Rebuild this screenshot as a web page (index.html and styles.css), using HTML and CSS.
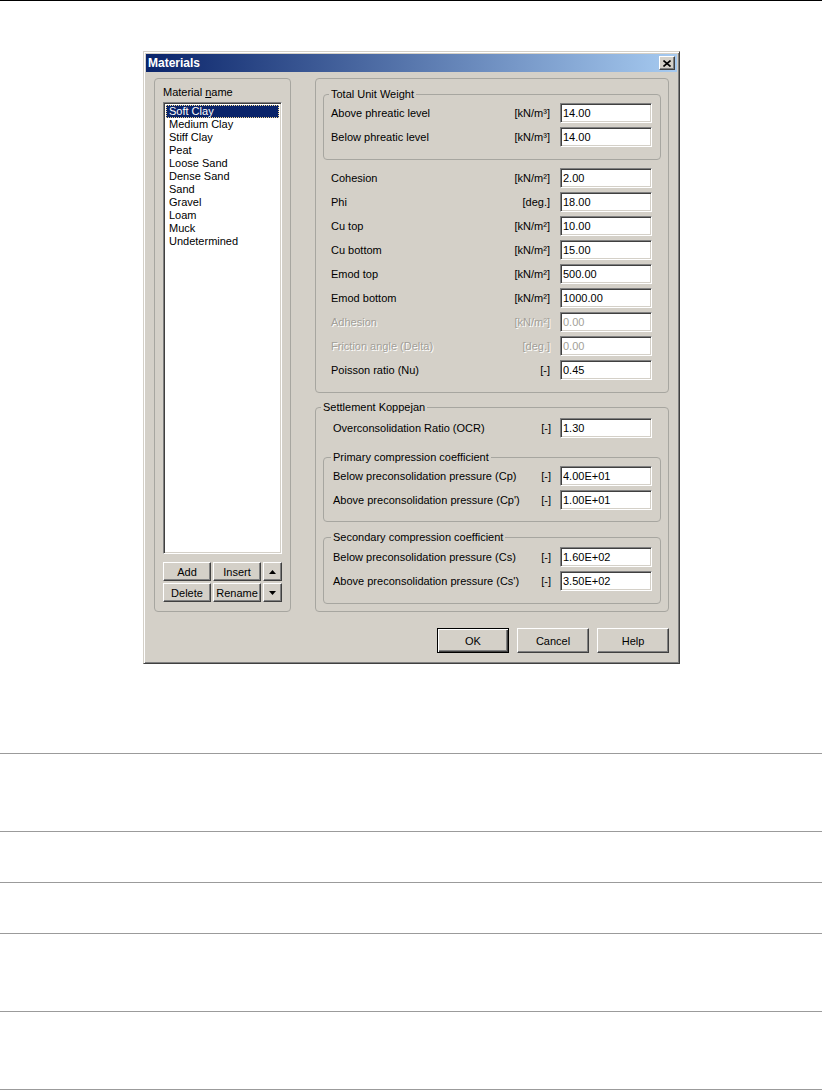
FILE: index.html
```html
<!DOCTYPE html>
<html>
    <head>

        <title>Materials</title>

        <link rel="stylesheet" href="styles.css">

    </head>
    <body>

        <div class="page-top"></div>

        <div class="figure">
            <div class="window">

                <div class="titlebar">
                    <span class="title">Materials</span>
                    <button class="btn close">
                        <svg width="8" height="7" viewBox="0 0 8 7"><path d="M0.5 0.5L7.5 6.5M7.5 0.5L0.5 6.5" stroke="#000" stroke-width="1.6"/></svg>
                    </button>
                </div>

                <div class="dialog-body">
                    <div class="columns">

                        <div class="group list-group">
                            <div class="caption">Material <u>n</u>ame</div>
                            <ul class="listbox">
                                <li class="selected">Soft Clay</li>
                                <li>Medium Clay</li>
                                <li>Stiff Clay</li>
                                <li>Peat</li>
                                <li>Loose Sand</li>
                                <li>Dense Sand</li>
                                <li>Sand</li>
                                <li>Gravel</li>
                                <li>Loam</li>
                                <li>Muck</li>
                                <li>Undetermined</li>
                            </ul>
                            <div class="list-buttons">
                                <button class="btn">Add</button>
                                <button class="btn">Insert</button>
                                <button class="btn arrow"><svg width="7" height="4" viewBox="0 0 7 4"><path d="M0 4H7L3.5 0Z"/></svg></button>
                                <button class="btn">Delete</button>
                                <button class="btn">Rename</button>
                                <button class="btn arrow"><svg width="7" height="4" viewBox="0 0 7 4"><path d="M0 0H7L3.5 4Z"/></svg></button>
                            </div>
                        </div>

                        <div class="params">

                            <div class="group props">
                                <fieldset class="subgroup weight">
                                    <legend>Total Unit Weight</legend>
                                    <div class="row">
                                        <span class="label">Above phreatic level</span>
                                        <span class="unit">[kN/m³]</span>
                                        <input class="edit" type="text" value="14.00">
                                    </div>
                                    <div class="row">
                                        <span class="label">Below phreatic level</span>
                                        <span class="unit">[kN/m³]</span>
                                        <input class="edit" type="text" value="14.00">
                                    </div>
                                </fieldset>

                                <div class="rows">
                                    <div class="row">
                                        <span class="label">Cohesion</span>
                                        <span class="unit">[kN/m²]</span>
                                        <input class="edit" type="text" value="2.00">
                                    </div>
                                    <div class="row">
                                        <span class="label">Phi</span>
                                        <span class="unit">[deg.]</span>
                                        <input class="edit" type="text" value="18.00">
                                    </div>
                                    <div class="row">
                                        <span class="label">Cu top</span>
                                        <span class="unit">[kN/m²]</span>
                                        <input class="edit" type="text" value="10.00">
                                    </div>
                                    <div class="row">
                                        <span class="label">Cu bottom</span>
                                        <span class="unit">[kN/m²]</span>
                                        <input class="edit" type="text" value="15.00">
                                    </div>
                                    <div class="row">
                                        <span class="label">Emod top</span>
                                        <span class="unit">[kN/m²]</span>
                                        <input class="edit" type="text" value="500.00">
                                    </div>
                                    <div class="row">
                                        <span class="label">Emod bottom</span>
                                        <span class="unit">[kN/m²]</span>
                                        <input class="edit" type="text" value="1000.00">
                                    </div>
                                    <div class="row disabled">
                                        <span class="label">Adhesion</span>
                                        <span class="unit">[kN/m²]</span>
                                        <input class="edit" type="text" value="0.00" disabled>
                                    </div>
                                    <div class="row disabled">
                                        <span class="label">Friction angle (Delta)</span>
                                        <span class="unit">[deg.]</span>
                                        <input class="edit" type="text" value="0.00" disabled>
                                    </div>
                                    <div class="row">
                                        <span class="label">Poisson ratio (Nu)</span>
                                        <span class="unit">[-]</span>
                                        <input class="edit" type="text" value="0.45">
                                    </div>
                                </div>
                            </div>

                            <fieldset class="group settlement">
                                <legend>Settlement Koppejan</legend>
                                <div class="row ocr">
                                    <span class="label">Overconsolidation Ratio (OCR)</span>
                                    <span class="unit">[-]</span>
                                    <input class="edit" type="text" value="1.30">
                                </div>

                                <fieldset class="subgroup primary">
                                    <legend>Primary compression coefficient</legend>
                                    <div class="row">
                                        <span class="label">Below preconsolidation pressure (Cp)</span>
                                        <span class="unit">[-]</span>
                                        <input class="edit" type="text" value="4.00E+01">
                                    </div>
                                    <div class="row">
                                        <span class="label">Above preconsolidation pressure (Cp')</span>
                                        <span class="unit">[-]</span>
                                        <input class="edit" type="text" value="1.00E+01">
                                    </div>
                                </fieldset>

                                <fieldset class="subgroup secondary">
                                    <legend>Secondary compression coefficient</legend>
                                    <div class="row">
                                        <span class="label">Below preconsolidation pressure (Cs)</span>
                                        <span class="unit">[-]</span>
                                        <input class="edit" type="text" value="1.60E+02">
                                    </div>
                                    <div class="row">
                                        <span class="label">Above preconsolidation pressure (Cs')</span>
                                        <span class="unit">[-]</span>
                                        <input class="edit" type="text" value="3.50E+02">
                                    </div>
                                </fieldset>
                            </fieldset>

                        </div>
                    </div>

                    <div class="dialog-buttons">
                        <button class="btn default">OK</button>
                        <button class="btn">Cancel</button>
                        <button class="btn">Help</button>
                    </div>
                </div>

            </div>
        </div>

        <div class="doc-rows">
            <div class="doc-row tall"></div>
            <div class="doc-row"></div>
            <div class="doc-row"></div>
            <div class="doc-row tall"></div>
            <div class="doc-row tall"></div>
        </div>

    </body>
</html>
```

FILE: styles.css
```css
/** Page **/
body {
    margin: 0;
    background-color: #fff;
    font-family: "Liberation Sans", Arial, sans-serif;
    font-size: 11px;
    color: #000;
}
.page-top {
    border-top: 1px solid #000;
}
.figure {
    padding-top: 50px;
}

/** Window **/
.window {
    width: 537px;
    margin-left: 143px;
    box-sizing: border-box;
    padding: 2px;
    border: 1px solid;
    border-color: #d4d0c8 #404040 #404040 #d4d0c8;
    box-shadow: inset 1px 1px #fff, inset -1px -1px #808080;
    background-color: #d4d0c8;
}
.titlebar {
    display: flex;
    align-items: center;
    justify-content: space-between;
    height: 18px;
    padding: 0 2px;
    background: linear-gradient(to right, #0a246a, #a6caf0);
}
.title {
    color: #fff;
    font-size: 12px;
    font-weight: bold;
    line-height: 18px;
}

/** Buttons **/
.btn {
    display: flex;
    align-items: center;
    justify-content: center;
    box-sizing: border-box;
    padding: 0;
    border: 1px solid;
    border-color: #fff #404040 #404040 #fff;
    box-shadow: inset -1px -1px #808080, inset 1px 1px #d4d0c8;
    background-color: #d4d0c8;
    font-family: inherit;
    font-size: 11px;
    color: #000;
}
.btn.close {
    width: 16px;
    height: 14px;
}
.btn.default {
    border-color: #000;
    box-shadow: inset 1px 1px #fff, inset -1px -1px #404040, inset -2px -2px #808080;
}

/** Dialog body **/
.dialog-body {
    padding: 6px 8px 8px 8px;
}
.columns {
    display: flex;
    gap: 24px;
}
.group {
    box-sizing: border-box;
    margin: 0;
    border: 1px solid #a7a6a0;
    border-radius: 4px;
}
fieldset.group,
fieldset.subgroup {
    min-width: 0;
}
legend {
    padding: 0 2px;
    margin-left: -2px;
    line-height: 13px;
}

/** Material list **/
.list-group {
    width: 137px;
    padding: 7px 8px 9px 8px;
}
.caption {
    line-height: 13px;
    margin-bottom: 3px;
}
.listbox {
    list-style-type: none;
    margin: 0;
    padding: 0;
    height: 452px;
    box-sizing: border-box;
    border: 1px solid;
    border-color: #808080 #fff #fff #808080;
    box-shadow: inset 1px 1px #404040, inset -1px -1px #d4d0c8;
    background-color: #fff;
    padding: 2px;
}
.listbox li {
    height: 13px;
    line-height: 13px;
    padding-left: 3px;
}
.listbox li.selected {
    background-color: #0a246a;
    color: #fff;
    outline: 1px dotted #f5db95;
    outline-offset: -1px;
}
.list-buttons {
    display: grid;
    grid-template-columns: 48px 48px 1fr;
    grid-auto-rows: 19px;
    gap: 2px;
    margin-top: 8px;
}

/** Parameters **/
.params {
    width: 354px;
}
.props {
    padding: 9px 7px 12px 7px;
}
.subgroup {
    margin: 0;
    border: 1px solid #a7a6a0;
    border-radius: 4px;
}
.weight {
    padding: 2px 8px 12px 7px;
}
.rows {
    margin-top: 8px;
    padding: 0 9px 0 8px;
}
.row {
    display: flex;
    align-items: center;
    height: 20px;
}
.row + .row {
    margin-top: 4px;
}
.label {
    flex: 1;
    white-space: nowrap;
}
.unit {
    margin-right: 10px;
    white-space: nowrap;
}
.edit {
    width: 92px;
    height: 20px;
    box-sizing: border-box;
    margin: 0;
    padding: 0 2px;
    border: 1px solid;
    border-color: #808080 #fff #fff #808080;
    box-shadow: inset 1px 1px #404040, inset -1px -1px #d4d0c8;
    background-color: #fff;
    font-family: inherit;
    font-size: 11px;
    color: #000;
    outline: none;
}
.row.disabled .label,
.row.disabled .unit {
    color: #a29f98;
    text-shadow: 1px 1px #fff;
}
.edit:disabled {
    color: #a29f98;
    background-color: #fff;
}

/** Settlement **/
.settlement {
    margin-top: 8px;
    padding: 4px 7px 7px 7px;
}
.settlement .ocr {
    padding: 0 9px 0 10px;
}
.primary {
    margin-top: 13px;
    padding: 2px 8px 11px 9px;
}
.secondary {
    margin-top: 9px;
    padding: 3px 8px 12px 9px;
}
.settlement .row .unit {
    margin-right: 9px;
}

/** Dialog buttons **/
.dialog-buttons {
    display: flex;
    justify-content: flex-end;
    gap: 8px;
    margin-top: 16px;
}
.dialog-buttons .btn {
    width: 72px;
    height: 25px;
}

/** Document rows **/
.doc-rows {
    margin-top: 89px;
}
.doc-row {
    height: 50px;
    border-top: 1px solid #9b9b9b;
}
.doc-row.tall {
    height: 77px;
}
.doc-row:last-child {
    border-bottom: 1px solid #9b9b9b;
}
```
